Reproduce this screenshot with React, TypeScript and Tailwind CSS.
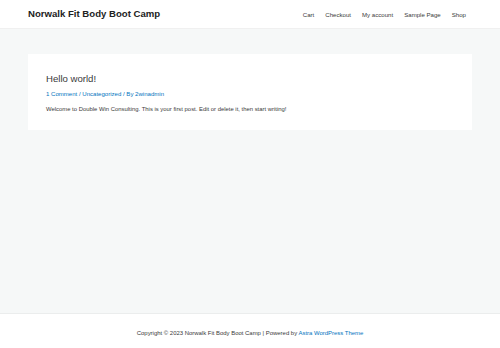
const navItems = ['Cart', 'Checkout', 'My account', 'Sample Page', 'Shop']

const App = () => {
  return (
    <div
      className="min-h-[348px] flex flex-col bg-[#f6f8f8] text-[#3a3a3a]"
      style={{ fontFamily: '"Liberation Sans", Arial, sans-serif' }}
    >
      <header className="bg-white h-[29px] border-b border-[#f0f0f0]">
        <div className="flex items-center justify-between h-full pl-[28px] pr-[34px] pt-[1px]">
          <a href="#" className="text-[9.6px] font-bold text-[#222]">
            Norwalk Fit Body Boot Camp
          </a>
          <nav className="flex items-center gap-[11px] text-[6.1px] text-[#3a3a3a]">
            {navItems.map((item) => (
              <a key={item} href="#">
                {item}
              </a>
            ))}
          </nav>
        </div>
      </header>

      <main className="flex-1 px-[28px] pt-[25px]">
        <article className="bg-white px-[18px] pt-[19px] h-[76px]">
          <h2 className="text-[9.6px] leading-[12px] text-[#3a3a3a]">Hello world!</h2>
          <div className="mt-[5.5px] text-[6.05px] leading-[7px] text-[#0274be]">
            <a href="#">1 Comment</a>
            <span> / </span>
            <a href="#">Uncategorized</a>
            <span> / By </span>
            <a href="#">2winadmin</a>
          </div>
          <p className="mt-[8.5px] text-[5.9px] leading-[7px] text-[#3a3a3a]">
            Welcome to Double Win Consulting. This is your first post. Edit or delete it, then start writing!
          </p>
        </article>
      </main>

      <footer className="bg-white border-t border-[#ebeded] h-[35px] flex items-center justify-center pt-[4px] text-[5.95px] text-[#3a3a3a]">
        <span>
          Copyright © 2023 Norwalk Fit Body Boot Camp | Powered by{' '}
          <a href="#" className="text-[#0274be]">
            Astra WordPress Theme
          </a>
        </span>
      </footer>
    </div>
  )
}

export default App
